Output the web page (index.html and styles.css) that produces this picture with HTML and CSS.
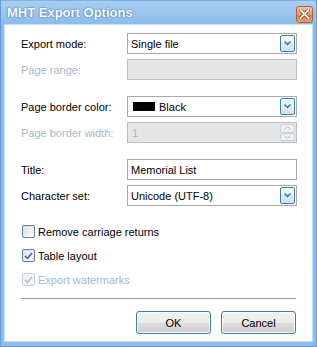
FILE: index.html
```html
<!DOCTYPE html>
<html lang="en">
<head>
  <meta charset="UTF-8" />
  <title>MHT Export Options</title>
  <link rel="stylesheet" href="styles.css">
</head>
<body>
  <div class="window">
    <div class="titlebar">
      <span class="title">MHT Export Options</span>
      <span class="close">
        <svg width="11" height="10" viewBox="0 0 11 10">
          <path d="M1.5 1 L9.5 9 M9.5 1 L1.5 9" stroke="#8a3b1c" stroke-width="3.4" stroke-linecap="square" fill="none"/>
          <path d="M1.5 1 L9.5 9 M9.5 1 L1.5 9" stroke="#fff" stroke-width="1.8" stroke-linecap="square" fill="none"/>
        </svg>
      </span>
    </div>

    <div class="client">
      <div class="group">
        <div class="row">
          <span class="lbl">Export mode:</span>
          <div class="combo">
            <span>Single file</span>
            <span class="drop"><svg width="7" height="5" viewBox="0 0 7 5"><path d="M0.5 0.5 L3.5 3.5 L6.5 0.5" stroke="#2a6cb0" stroke-width="1.4" fill="none"/></svg></span>
          </div>
        </div>
        <div class="row off">
          <span class="lbl">Page range:</span>
          <div class="field"></div>
        </div>
      </div>

      <div class="group">
        <div class="row">
          <span class="lbl">Page border color:</span>
          <div class="combo">
            <span class="value"><span class="swatch"></span>Black</span>
            <span class="drop"><svg width="7" height="5" viewBox="0 0 7 5"><path d="M0.5 0.5 L3.5 3.5 L6.5 0.5" stroke="#2a6cb0" stroke-width="1.4" fill="none"/></svg></span>
          </div>
        </div>
        <div class="row off">
          <span class="lbl">Page border width:</span>
          <div class="field">
            <span>1</span>
            <span class="spin">
              <span class="half"><svg width="7" height="4" viewBox="0 0 7 4"><path d="M0.5 3.5 L3.5 0.5 L6.5 3.5" stroke="#a9bfd3" stroke-width="1" fill="none"/></svg></span>
              <span class="half"><svg width="7" height="4" viewBox="0 0 7 4"><path d="M0.5 0.5 L3.5 3.5 L6.5 0.5" stroke="#a9bfd3" stroke-width="1" fill="none"/></svg></span>
            </span>
          </div>
        </div>
      </div>

      <div class="group">
        <div class="row">
          <span class="lbl">Title:</span>
          <div class="text">Memorial List</div>
        </div>
        <div class="row">
          <span class="lbl">Character set:</span>
          <div class="combo">
            <span>Unicode (UTF-8)</span>
            <span class="drop"><svg width="7" height="5" viewBox="0 0 7 5"><path d="M0.5 0.5 L3.5 3.5 L6.5 0.5" stroke="#2a6cb0" stroke-width="1.4" fill="none"/></svg></span>
          </div>
        </div>
      </div>

      <div class="checks">
        <div class="check"><span class="box"></span>Remove carriage returns</div>
        <div class="check"><span class="box"><svg width="9" height="8" viewBox="0 0 9 8"><path d="M1 4 L3.5 6.5 L8 1" stroke="#2b5f96" stroke-width="1.4" fill="none"/></svg></span>Table layout</div>
        <div class="check off"><span class="box"><svg width="9" height="8" viewBox="0 0 9 8"><path d="M1 4 L3.5 6.5 L8 1" stroke="#a6bccf" stroke-width="1.4" fill="none"/></svg></span>Export watermarks</div>
      </div>

      <div class="sep"></div>

      <div class="buttons">
        <button class="btn">OK</button>
        <button class="btn">Cancel</button>
      </div>
    </div>
  </div>
</body>
</html>
```

FILE: styles.css
```css
body {
  margin: 0;
  font-family: "Liberation Sans", Arial, sans-serif;
  font-size: 11px;
  color: #000;
}
.window {
  width: 317px;
  height: 347px;
  box-sizing: border-box;
  border: 1px solid #5f9ad6;
  border-top-color: #7fb2e6;
  padding: 0 3px 4px;
  background: linear-gradient(#a9cdf1, #8cbcec 24px, #8dbdee);
  display: flex;
  flex-direction: column;
}
.titlebar {
  height: 23px;
  display: flex;
  align-items: center;
  justify-content: space-between;
  padding-left: 3px;
  padding-right: 0;
}
.title {
  font-size: 13px;
  font-weight: bold;
  color: #fff;
  text-shadow: 0 0 2px #3d76b4, 0 0 1px #3d76b4;
  margin-top: -1px;
}
.close {
  width: 17px;
  height: 17px;
  box-sizing: border-box;
  margin-top: 3px;
  border: 1px solid #b45c36;
  border-radius: 3px;
  background: linear-gradient(#f9c8ac, #ee9a6c 50%, #e47c48 51%, #f0a070);
  display: flex;
  align-items: center;
  justify-content: center;
}
.client {
  flex: 1;
  background: #fff;
  padding: 8px 16px 0;
  border: 1px solid #c6ddf4;
  border-left-color: #d3e5f7;
}
.group { margin-bottom: 16px; }
.group:nth-child(3) { margin-bottom: 0; }
.row {
  display: grid;
  grid-template-columns: 106px 170px;
  align-items: center;
  height: 21px;
  margin-bottom: 5px;
}
.row:last-child { margin-bottom: 0; }
.off { color: #a3b8cd; }
.combo, .field, .text {
  height: 21px;
  box-sizing: border-box;
  border: 1px solid #a9a9a9;
  background: #fff;
  display: flex;
  align-items: center;
  justify-content: space-between;
  padding-left: 3px;
}
.field {
  background: #e6e6e6;
  border-color: #bcbcbc;
  padding-left: 4px;
}
.value {
  display: flex;
  align-items: center;
}
.swatch {
  width: 22px;
  height: 9px;
  background: #000;
  margin: 0 4px 0 2px;
}
.drop {
  width: 15px;
  height: 17px;
  box-sizing: border-box;
  margin-right: 1px;
  border: 1px solid #3c7fb1;
  border-radius: 2px;
  background: linear-gradient(#f7fbfe, #e4eef6 50%, #d3dde6);
  display: flex;
  align-items: center;
  justify-content: center;
}
.spin {
  width: 15px;
  height: 17px;
  margin-right: 1px;
  display: flex;
  flex-direction: column;
}
.half {
  flex: 1;
  box-sizing: border-box;
  border: 1px solid #c5d3e0;
  border-radius: 2px;
  background: #f0f0f0;
  display: flex;
  align-items: center;
  justify-content: center;
}
.checks {
  margin-top: 19px;
  display: flex;
  flex-direction: column;
  gap: 11px;
}
.check {
  display: flex;
  align-items: center;
  height: 13px;
  padding-left: 1px;
}
.box {
  width: 13px;
  height: 13px;
  box-sizing: border-box;
  border: 1px solid #5c7fa3;
  border-radius: 2px;
  background: linear-gradient(135deg, #dedede, #fafafa);
  margin-right: 3px;
  display: flex;
  align-items: center;
  justify-content: center;
}
.check.off .box {
  border-color: #c4d0dc;
  background: #f2f2f2;
}
.sep {
  height: 1px;
  background: #a0a0a0;
  margin-top: 12px;
}
.buttons {
  display: flex;
  justify-content: flex-end;
  gap: 10px;
  margin-top: 12px;
}
.btn {
  width: 75px;
  height: 23px;
  font-family: inherit;
  font-size: 11px;
  color: #000;
  border: 1px solid #3c7fb1;
  border-radius: 3px;
  box-shadow: inset 0 0 0 1px #fbfbfb;
  background: linear-gradient(#f3f3f3, #ebebeb 50%, #dddddd 50%, #cfcfcf);
  padding: 0;
}
```
